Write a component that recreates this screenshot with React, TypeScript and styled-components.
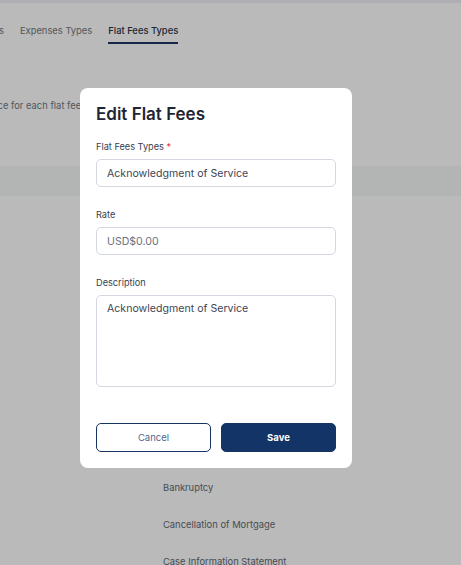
import styled, { createGlobalStyle } from 'styled-components';

const GlobalStyle = createGlobalStyle`
	html, body {
		margin: 0;
		padding: 0;
		background: #ffffff;
		font-family: Inter, "Noto Sans", sans-serif;
		overflow: hidden;
	}
	* {
		box-sizing: border-box;
	}
`;

const Page = styled.div`
	width: 461px;
	height: 565px;
	overflow: hidden;
	background: #ffffff;
`;

const TopStrip = styled.div`
	height: 3px;
	background: #eef0f4;
`;

const TabList = styled.div`
	display: flex;
	gap: 16px;
	margin-left: -23px;
	padding-top: 21px;
	white-space: nowrap;
`;

const Tab = styled.div<{ $active?: boolean }>`
	font-size: 9.4px;
	line-height: 14px;
	padding-bottom: 4px;
	color: ${(p) => (p.$active ? '#283548' : '#6f7782')};
	font-weight: ${(p) => (p.$active ? 500 : 400)};
	border-bottom: 2px solid ${(p) => (p.$active ? '#1d3561' : 'transparent')};
`;

const Intro = styled.p`
	margin: 55px 0 0 -48px;
	font-size: 9.4px;
	line-height: 14px;
	color: #6f7782;
	white-space: nowrap;
`;

const TableHead = styled.div`
	height: 30px;
	margin-top: 53px;
	background: #f6f7f7;
`;

const Rows = styled.div`
	display: flex;
	flex-direction: column;
	padding-top: 14px;
`;

const Row = styled.div`
	height: 37px;
	display: flex;
	align-items: center;
	padding-left: 163px;
	font-size: 9.4px;
	color: #636a73;
`;

const Overlay = styled.div`
	position: fixed;
	inset: 0;
	background: rgba(0, 0, 0, 0.27);
	display: flex;
	align-items: flex-start;
	padding: 88px 0 0 80px;
`;

const Modal = styled.div`
	width: 272px;
	background: #ffffff;
	border-radius: 8px;
	padding: 16px;
	display: flex;
	flex-direction: column;
`;

const Title = styled.h2`
	margin: 0 0 16px;
	font-size: 17px;
	line-height: 20px;
	font-weight: 600;
	color: #1f2633;
`;

const Form = styled.div`
	display: flex;
	flex-direction: column;
	gap: 21px;
`;

const Field = styled.div`
	display: flex;
	flex-direction: column;
	gap: 5px;
`;

const Label = styled.label`
	font-size: 9.2px;
	line-height: 14px;
	color: #374151;
`;

const Required = styled.span`
	color: #e02424;
`;

const Input = styled.div<{ $muted?: boolean }>`
	height: 28px;
	border: 1px solid #d3d8e0;
	border-radius: 5px;
	padding: 0 10px;
	display: flex;
	align-items: center;
	font-size: 10.6px;
	color: ${(p) => (p.$muted ? '#6b7280' : '#3f4654')};
`;

const TextArea = styled.div`
	height: 92px;
	border: 1px solid #d3d8e0;
	border-radius: 5px;
	padding: 6px 10px;
	font-size: 10.6px;
	line-height: 14px;
	color: #3f4654;
`;

const Actions = styled.div`
	display: grid;
	grid-template-columns: 1fr 1fr;
	gap: 10px;
	margin-top: 36px;
`;

const Button = styled.button<{ $primary?: boolean }>`
	height: 29px;
	border-radius: 5px;
	font-family: Inter, "Noto Sans", sans-serif;
	font-size: 9.5px;
	border: 1px solid #173463;
	background: ${(p) => (p.$primary ? '#133466' : '#ffffff')};
	color: ${(p) => (p.$primary ? '#ffffff' : '#52668f')};
	font-weight: ${(p) => (p.$primary ? 700 : 400)};
	cursor: pointer;
`;

const rows = [
	'Acknowledgment of Service',
	'Affidavit of Service',
	'Amendment of Pleadings',
	'Appeal Filing',
	'Application Fee',
	'Arbitration',
	'Assignment of Mortgage',
	'Bankruptcy',
	'Cancellation of Mortgage',
	'Case Information Statement',
];

export default function App() {
	return (
		<Page>
			<GlobalStyle />
			<TopStrip />
			<TabList>
				<Tab>Types</Tab>
				<Tab>Expenses Types</Tab>
				<Tab $active>Flat Fees Types</Tab>
			</TabList>
			<Intro>Set the price for each flat fee type.</Intro>
			<TableHead />
			<Rows>
				{rows.map((r) => (
					<Row key={r}>{r}</Row>
				))}
			</Rows>
			<Overlay>
				<Modal role="dialog" aria-modal="true">
					<Title>Edit Flat Fees</Title>
					<Form>
						<Field>
							<Label>
								Flat Fees Types <Required>*</Required>
							</Label>
							<Input>Acknowledgment of Service</Input>
						</Field>
						<Field>
							<Label>Rate</Label>
							<Input $muted>USD$0.00</Input>
						</Field>
						<Field>
							<Label>Description</Label>
							<TextArea>Acknowledgment of Service</TextArea>
						</Field>
					</Form>
					<Actions>
						<Button type="button">Cancel</Button>
						<Button type="button" $primary>
							Save
						</Button>
					</Actions>
				</Modal>
			</Overlay>
		</Page>
	);
}
